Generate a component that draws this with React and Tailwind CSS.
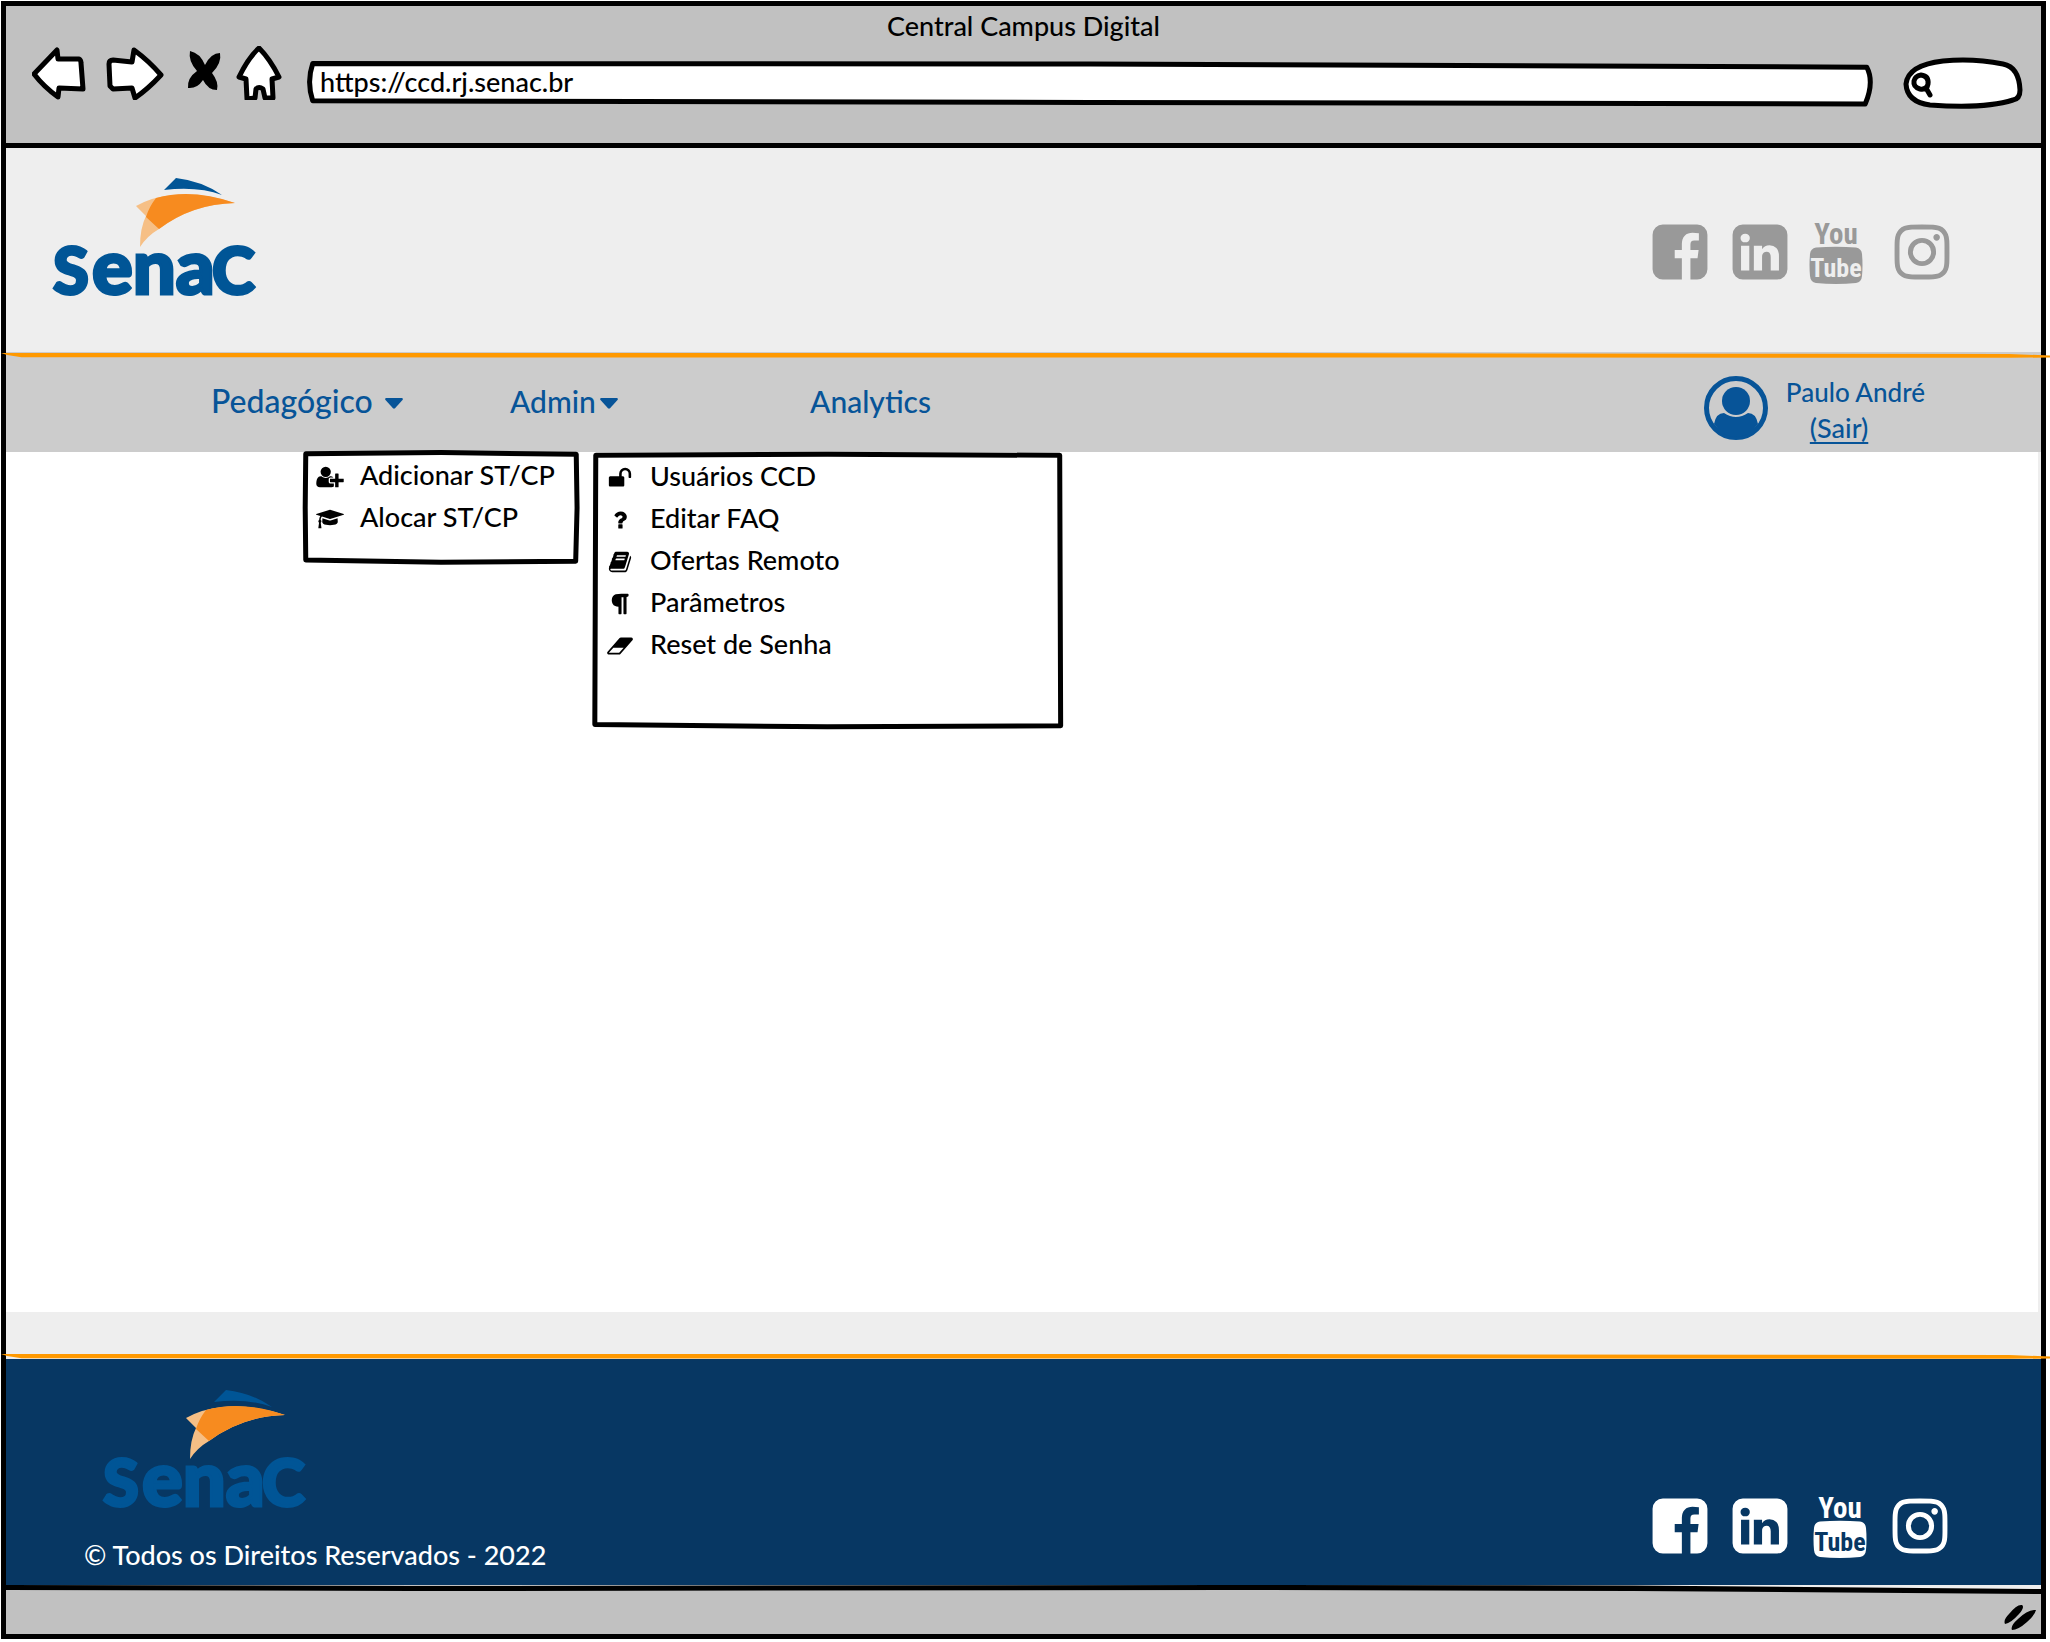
const ICONS = {
  facebook: {
    box: '0 0 1792 1792',
    d: 'M1376 128q119 0 203.500 84.500t84.500 203.500v960q0 119-84.500 203.500t-203.500 84.500h-188v-595h199l30-232h-229v-148q0-56 23.500-84t91.500-28l122-1v-207q-63-9-178-9-136 0-217.500 80t-81.500 226v171h-200v232h200v595h-532q-119 0-203.500-84.500t-84.500-203.500v-960q0-119 84.500-203.500t203.500-84.500h960z',
  },
  linkedin: {
    box: '0 0 1792 1792',
    d: 'M365 1414h231v-694h-231v694zm246-908q-1-52-36-86t-93-34-94.500 34-36.500 86q0 51 35.500 85.500t92.500 34.500h1q59 0 95-34.500t36-85.500zm585 908h231v-398q0-154-73-233t-193-79q-136 0-209 117h2v-101h-231q3 66 0 694h231v-388q0-38 7-56 15-35 45-59.500t74-24.500q116 0 116 157v371zm468-998v960q0 119-84.500 203.500t-203.500 84.500h-960q-119 0-203.500-84.500t-84.500-203.500v-960q0-119 84.500-203.500t203.500-84.500h960q119 0 203.500 84.500t84.500 203.500z',
  },
  instagram: {
    box: '0 0 1792 1792',
    d: 'M1152 896q0-106-75-181t-181-75-181 75-75 181 75 181 181 75 181-75 75-181zm138 0q0 164-115 279t-279 115-279-115-115-279 115-279 279-115 279 115 115 279zm108-410q0 38-27 65t-65 27-65-27-27-65 27-65 65-27 65 27 27 65zm-502-220q-7 0-76.500-.5t-105.500 0-96.500 3-103 10-71.500 18.500q-50 20-88 58t-58 88q-11 29-18.500 71.500t-10 103-3 96.500 0 105.500.5 76.500-.5 76.500 0 105.500 3 96.500 10 103 18.500 71.500q20 50 58 88t88 58q29 11 71.500 18.500t103 10 96.500 3 105.500 0 76.500-.5 76.500.5 105.500 0 96.500-3 103-10 71.500-18.500q50-20 88-58t58-88q11-29 18.500-71.500t10-103 3-96.500 0-105.500-.5-76.500.5-76.500 0-105.500-3-96.500-10-103-18.500-71.500q-20-50-58-88t-88-58q-29-11-71.500-18.500t-103-10-96.500-3-105.500 0-76.500.5zm768 630q0 229-5 317-10 208-124 322t-322 124q-88 5-317 5t-317-5q-208-10-322-124t-124-322q-5-88-5-317t5-317q10-208 124-322t322-124q88-5 317-5t317 5q208 10 322 124t124 322q5 88 5 317z',
  },
  userPlus: {
    box: '0 0 2048 1792',
    d: 'M704 896q-159 0-271.500-112.500t-112.500-271.500 112.500-271.500 271.500-112.500 271.500 112.500 112.500 271.500-112.500 271.500-271.500 112.500zm960 128h352q13 0 22.500 9.500t9.500 22.500v192q0 13-9.500 22.500t-22.500 9.500h-352v352q0 13-9.500 22.500t-22.500 9.500h-192q-13 0-22.500-9.500t-9.500-22.500v-352h-352q-13 0-22.500-9.500t-9.500-22.500v-192q0-13 9.500-22.500t22.500-9.500h352v-352q0-13 9.500-22.500t22.500-9.500h192q13 0 22.500 9.500t9.500 22.500v352zm-736 224q0 52 38 90t90 38h256v238q-68 50-171 50h-874q-121 0-194-69t-73-190q0-53 3.500-103.500t14-109 26.500-108.500 43-97.500 62-81 85.500-53.500 111.500-20q19 0 39 17 79 61 154.500 91.500t164.500 30.500 164.500-30.500 154.500-91.500q20-17 39-17 132 0 217 96h-223q-52 0-90 38t-38 90v192z',
  },
  cap: {
    box: '0 0 2304 1792',
    d: 'M1774 836l18 316q4 69-82 128t-235 93.500-323 34.500-323-34.500-235-93.500-82-128l18-316 574 181q22 7 48 7t48-7zm530-324q0 23-22 31l-1120 352q-4 1-10 1t-10-1l-652-206q-43 34-71 111.500t-34 178.500q63 36 63 109 0 69-58 107l58 433q2 14-8 25-9 11-24 11h-192q-15 0-24-11-10-11-8-25l58-433q-58-38-58-107 0-73 65-111 11-207 98-330l-333-104q-22-8-22-31t22-31l1120-352q4-1 10-1t10 1l1120 352q22 8 22 31z',
  },
  unlock: {
    box: '0 0 1792 1792',
    d: 'M1728 576v256q0 26-19 45t-45 19h-64q-26 0-45-19t-19-45v-256q0-106-75-181t-181-75-181 75-75 181v192h96q40 0 68 28t28 68v576q0 40-28 68t-68 28h-960q-40 0-68-28t-28-68v-576q0-40 28-68t68-28h672v-192q0-185 131.500-316.500t316.500-131.500 316.500 131.500 131.500 316.500z',
  },
  question: {
    box: '0 0 1792 1792',
    d: 'M1088 1256v240q0 16-12 28t-28 12h-240q-16 0-28-12t-12-28v-240q0-16 12-28t28-12h240q16 0 28 12t12 28zm316-600q0 54-15.500 101t-35 76.500-55 59.500-57.500 43.500-61 35.500q-41 23-68.500 65t-27.500 67q0 17-12 32.500t-28 15.500h-240q-15 0-25.500-18.500t-10.500-37.500v-45q0-83 65-156.500t143-108.500q59-27 84-56t25-76q0-42-46.500-74t-107.500-32q-65 0-108 29-35 25-107 115-13 16-31 16-12 0-25-8l-164-125q-13-10-15.500-25t5.500-28q160-266 464-266 80 0 161 31t146 83 106 127.500 41 158.500z',
  },
  book: {
    box: '0 0 1792 1792',
    d: 'M1703 478q40 57 18 129l-275 906q-19 64-76.500 107.500t-122.500 43.500h-923q-77 0-148.500-53.500t-99.500-131.500q-24-67-2-127 0-4 3-27t4-37q1-8-3-21.500t-3-19.500q2-11 8-21t16.500-23.500 16.500-23.500q23-38 45-91.500t30-91.500q3-10 .5-30t-.5-28q3-11 17-28t17-23q21-36 42-92t25-90q1-9-2.500-32t.5-28q4-13 22-30.500t22-22.500q19-26 42.500-84.500t27.500-96.500q1-8-3-25.500t-2-26.500q2-8 9-18t18-23 17-21q8-12 16.500-30.500t15-35 16-36 19.500-32 26.500-23.500 36-11.500 47.500 5.500l-1 3q38-9 51-9h761q74 0 114 56t18 130l-274 906q-36 119-71.500 153.500t-128.500 34.500h-869q-27 0-38 15-11 16-1 43 24 70 144 70h923q29 0 56-15.500t35-41.500l300-987q7-22 5-57 38 15 59 43zm-1064 2q-4 13 2 22.500t20 9.500h608q13 0 25.500-9.500t16.500-22.500l21-64q4-13-2-22.500t-20-9.500h-608q-13 0-25.500 9.500t-16.500 22.500zm-83 256q-4 13 2 22.500t20 9.500h608q13 0 25.500-9.500t16.500-22.500l21-64q4-13-2-22.500t-20-9.500h-608q-13 0-25.500 9.500t-16.500 22.500z',
  },
  paragraph: {
    box: '0 0 1792 1792',
    d: 'M1534 189v73q0 29-18.500 61t-42.500 32q-50 0-54 1-26 6-32 31-3 11-3 64v1152q0 25-18 43t-43 18h-108q-25 0-43-18t-18-43v-1218h-143v1218q0 25-17.500 43t-43.500 18h-108q-26 0-43.500-18t-17.500-43v-496q-147-12-245-59-126-58-192-179-64-117-64-259 0-166 88-286 88-118 209-159 111-37 417-37h479q25 0 43 18t18 43z',
  },
  eraser: {
    box: '0 0 2048 1792',
    d: 'M960 1408l336-384h-768l-336 384h768zm1013-1077q15 34 9.500 71.500t-30.500 65.500l-896 1024q-38 44-96 44h-768q-38 0-69.500-20.500t-47.500-54.500q-15-34-9.500-71.500t30.500-65.500l896-1024q38-44 96-44h768q38 0 69.500 20.500t47.500 54.500z',
  },
};

function Icon({ name, className }) {
  return (
    <svg viewBox={ICONS[name].box} className={className} fill="currentColor" aria-hidden="true">
      <path d={ICONS[name].d} />
    </svg>
  );
}

function YouTubeIcon({ inner }) {
  return (
    <svg viewBox="0 0 64 64" className="size-16 overflow-visible" fill="currentColor" aria-hidden="true">
      <text x="32" y="24" textAnchor="middle" fontFamily="'Liberation Sans Narrow', 'Roboto Condensed', sans-serif" fontWeight="700" fontSize="29">You</text>
      <path d="M12 27.500Q32 26 52 27.500Q57.500 28.500 58 34Q59 45 58 56Q57.500 62 52 63Q32 65 12 63Q6.500 62 6 56Q5 45 6 34Q6.500 28.500 12 27.500Z" />
      <text x="32" y="57" textAnchor="middle" fontFamily="'Liberation Sans Narrow', 'Roboto Condensed', sans-serif" fontWeight="700" fontSize="26" className={inner}>Tube</text>
    </svg>
  );
}

function SenacLogo() {
  return (
    <svg viewBox="0 0 200 118" className="h-[118px] w-[200px] overflow-visible" role="img" aria-label="Senac">
      <path d="M124 0L112 12Q146 8 170 17Q150 3 124 0Z" fill="#005596" />
      <path d="M84 28Q100 19 120 17Q150 14 183 25Q140 26 107 51Q95 58 88 69Q88 50 94 38Z" fill="#f6bf85" />
      <path d="M104 20Q140 10 183 25Q140 26 107 51L94 39Q97 29 104 20Z" fill="#f78b1f" />
      <g fill="#005596" stroke="#005596" strokeWidth="3" fontFamily="Lato, sans-serif" fontWeight="900">
        <text x="1" y="116" fontSize="65">S</text>
        <text x="40" y="116" fontSize="76">ena</text>
        <text x="160" y="116" fontSize="65">C</text>
      </g>
    </svg>
  );
}

function Social({ tone, inner, gaps }) {
  return (
    <nav aria-label="Redes sociais" className={`flex ${tone}`}>
      <a href="#facebook" aria-label="Facebook"><Icon name="facebook" className="size-16" /></a>
      <a href="#linkedin" aria-label="LinkedIn" className="ml-4"><Icon name="linkedin" className="size-16" /></a>
      <a href="#youtube" aria-label="YouTube" className={gaps[0]}><YouTubeIcon inner={inner} /></a>
      <a href="#instagram" aria-label="Instagram" className={gaps[1]}><Icon name="instagram" className="size-16" /></a>
    </nav>
  );
}

function SketchFrame({ d, fill = 'none' }) {
  return (
    <svg viewBox="0 0 100 100" preserveAspectRatio="none" className="pointer-events-none absolute inset-0 size-full overflow-visible" aria-hidden="true">
      <path d={d} fill={fill} stroke="#000" strokeWidth="5" strokeLinejoin="round" vectorEffect="non-scaling-stroke" />
    </svg>
  );
}

function OrangeRule() {
  return (
    <div className="-mr-[9px] -ml-[5px]">
      <svg viewBox="0 0 100 6" preserveAspectRatio="none" className="relative block h-[6px] w-full" aria-hidden="true">
        <path d="M0 1L.5 1L60 1L98 2L100 3.500V5.500L98 5.800L60 5.500L1 5.300L.3 3Z" fill="#ff9900" />
      </svg>
    </div>
  );
}

function Caret() {
  return (
    <svg viewBox="0 0 18 11" className="mt-1 h-[11px] w-[18px]" fill="currentColor" aria-hidden="true">
      <path d="M1 0H17Q18.500 .5 17.500 2L10 10.300Q9 11 8 10.300L.5 2Q-.5 .5 1 0Z" />
    </svg>
  );
}

function Menu({ items, className, frame }) {
  return (
    <div className={`absolute top-full z-10 text-black ${className}`}>
      <SketchFrame d={frame} fill="#fff" />
      <ul className="relative">
        {items.map(([icon, label]) => (
          <li key={label}>
            <a href="#item" className="flex h-[42px] items-center text-[27px] leading-8">
              <span className="mt-1 flex w-7 justify-center"><Icon name={icon} className="h-6 w-[28px]" /></span>
              <span className="ml-4 whitespace-nowrap">{label}</span>
            </a>
          </li>
        ))}
      </ul>
    </div>
  );
}

function BrowserBar() {
  return (
    <header className="bg-[#c1c1c1]">
      <h1 className="text-center text-[27px] leading-10">Central Campus Digital</h1>
      <div className="flex h-[97px] items-start pr-5 pl-[26px]">
        <button type="button" aria-label="Voltar" className="w-[56px]">
          <svg viewBox="0 0 56 54" className="h-[54px] w-[56px]"><path d="M2 28L25 4L26 13L47 13Q49 14 49 17L51 43L27 42L26 51Q12 41 2 28Z" fill="#fff" stroke="#000" strokeWidth="5" strokeLinejoin="round" /></svg>
        </button>
        <button type="button" aria-label="Avançar" className="ml-4 w-[60px]">
          <svg viewBox="0 0 60 54" className="h-[54px] w-[60px]"><path d="M5 18Q5 14 9 14L28 16L30 4Q45 15 57 29Q44 43 31 52L28 42L9 43L6 40Z" fill="#fff" stroke="#000" strokeWidth="5" strokeLinejoin="round" /></svg>
        </button>
        <button type="button" aria-label="Parar" className="ml-[22px] w-[36px]">
          <svg viewBox="0 0 36 54" className="h-[54px] w-[36px]"><path d="M4 5Q14 7 19 19Q25 7 34 7Q36 17 26 27Q33 36 31 44Q22 44 17 34Q11 43 2 42Q1 32 11 25Q2 15 4 5Z" fill="#000" /></svg>
        </button>
        <button type="button" aria-label="Início" className="ml-[14px] w-[46px]">
          <svg viewBox="0 0 46 54" className="h-[54px] w-[46px]"><path d="M23 2Q34 13 43 31L36 33L37 52L29 52L27 43Q23 40 20 43L19 52L11 53L10 33L3 31Q12 12 23 2Z" fill="#fff" stroke="#000" strokeWidth="5" strokeLinejoin="round" /></svg>
        </button>
        <div className="relative mt-4 ml-[26px] h-[40px] flex-1">
          <SketchFrame fill="#fff" d="M.3 4L50 5L99.600 13Q100.100 50 99.500 105L50 101L.3 97Q-.1 50 .3 4Z" />
          <input type="text" aria-label="Endereço" defaultValue="https://ccd.rj.senac.br" className="relative h-10 w-full bg-transparent px-3 text-[27px] outline-none" />
        </div>
        <label className="relative mt-[13px] ml-[32px] flex h-[48px] w-[116px] items-center">
          <svg viewBox="0 0 116 48" className="absolute inset-0 size-full overflow-visible" aria-hidden="true">
            <path d="M25 46Q2 43 1 25Q3 6 38 2Q68-1 98 5Q114 8 115 31Q115 40 108 41Q80 50 25 46Z" fill="#fff" stroke="#000" strokeWidth="5" />
            <path d="M16 16Q24 17 23 25Q22 31 15 30Q8 28 9 22Q10 17 16 16M21 29L25 36" fill="none" stroke="#000" strokeWidth="5" strokeLinecap="round" />
          </svg>
          <input type="text" aria-label="Pesquisar" className="relative ml-8 w-[70px] bg-transparent text-xl outline-none" />
        </label>
      </div>
    </header>
  );
}

export default function App() {
  return (
    <div className="flex min-h-screen flex-col overflow-hidden bg-white pt-px pr-[4px] pb-[3px] pl-px font-['Lato',sans-serif] font-medium text-black">
      <div className="relative flex flex-1 flex-col border-5 border-black">
        <BrowserBar />
        <div className="h-[5px] bg-black" />
        <section className="flex h-[204px] items-start justify-between bg-[#eeeeee] pt-[30px] pr-[87px] pl-[46px]">
          <SenacLogo />
          <div className="mt-[42px]">
            <Social tone="text-[#999999]" inner="fill-[#eeeeee]" gaps={['ml-3', 'ml-[22px]']} />
          </div>
        </section>
        <div className="h-[100px] bg-[#cccccc] text-[#075498]">
          <OrangeRule />
          <div className="flex h-[94px] items-start pl-[205px]">
            <div className="relative flex h-full w-[299px] items-start pt-[23px]">
              <button type="button" className="flex items-center gap-3 text-[32px] leading-10">Pedagógico <Caret /></button>
              <Menu
                className="left-[92px] h-[112px] w-[276px] pt-[2px] pl-[13px]"
                frame="M1 1.500L50 .5L99 2L99.300 50L98.800 97.500L50 98.500L1 96.500L.8 50Z"
                items={[['userPlus', 'Adicionar ST/CP'], ['cap', 'Alocar ST/CP']]}
              />
            </div>
            <div className="relative flex h-full w-[300px] items-start pt-[23px]">
              <button type="button" className="flex items-center gap-1 text-[30px] leading-10">Admin <Caret /></button>
              <Menu
                className="left-[82px] h-[277px] w-[471px] pt-[3px] pl-[14px]"
                frame="M.8 1.200L50 .8L99.300 1.200L99.400 50L99.500 98.800L50 99.200L.6 98.400L.7 50Z"
                items={[['unlock', 'Usuários CCD'], ['question', 'Editar FAQ'], ['book', 'Ofertas Remoto'], ['paragraph', 'Parâmetros'], ['eraser', 'Reset de Senha']]}
              />
            </div>
            <a href="#analytics" className="pt-[23px] text-[30px] leading-10">Analytics</a>
            <div className="mr-[116px] ml-auto flex items-start gap-[18px] pt-4">
              <svg viewBox="0 0 64 64" className="mt-[2px] size-16" aria-hidden="true">
                <circle cx="32" cy="32" r="29.500" fill="none" stroke="currentColor" strokeWidth="5" />
                <circle cx="32" cy="25" r="14" fill="currentColor" />
                <path d="M10 48Q12 37 20 37Q32 45 44 37Q52 37 54 48Q45 61 32 61Q19 61 10 48Z" fill="currentColor" />
              </svg>
              <div className="flex flex-col items-start text-[26px] leading-9">
                <span>Paulo André</span>
                <a href="#sair" className="ml-6 text-[27px] underline underline-offset-4">(Sair)</a>
              </div>
            </div>
          </div>
        </div>
        <main className="flex-1 border-r-3 border-[#eeeeee] bg-white" />
        <div className="h-[47px] bg-[#eeeeee] pt-[41px]">
          <OrangeRule />
        </div>
        <footer className="flex h-[226px] items-start justify-between bg-[#073763] pr-[89px] pl-[78px] text-white">
          <div className="pt-[31px]">
            <div className="pl-[18px]"><SenacLogo /></div>
            <p className="mt-[27px] text-[27px] leading-10">© Todos os Direitos Reservados - 2022</p>
          </div>
          <div className="mt-[135px]">
            <Social tone="text-white" inner="fill-[#073763]" gaps={['ml-4', 'ml-4']} />
          </div>
        </footer>
        <svg viewBox="0 0 100 9" preserveAspectRatio="none" className="block h-[9px] w-full bg-[#c1c1c1]" aria-hidden="true">
          <path d="M60 0H100V5Z" fill="#eee" />
          <path d="M0 0L20 1L60 0L80 .5L100 4V9L80 6L60 5L20 6L0 5Z" fill="#000" />
        </svg>
        <div className="flex h-[40px] items-start justify-end bg-[#c1c1c1] pr-1">
          <svg viewBox="0 0 34 30" className="mt-2 h-[30px] w-[34px]" aria-hidden="true">
            <path d="M2 22Q0 18 6 12Q14 2 19 3Q22 5 16 12Q8 21 2 22ZM9 28Q7 24 15 17Q25 7 33 8Q32 13 24 20Q15 28 9 28Z" fill="#000" />
          </svg>
        </div>
      </div>
    </div>
  );
}
